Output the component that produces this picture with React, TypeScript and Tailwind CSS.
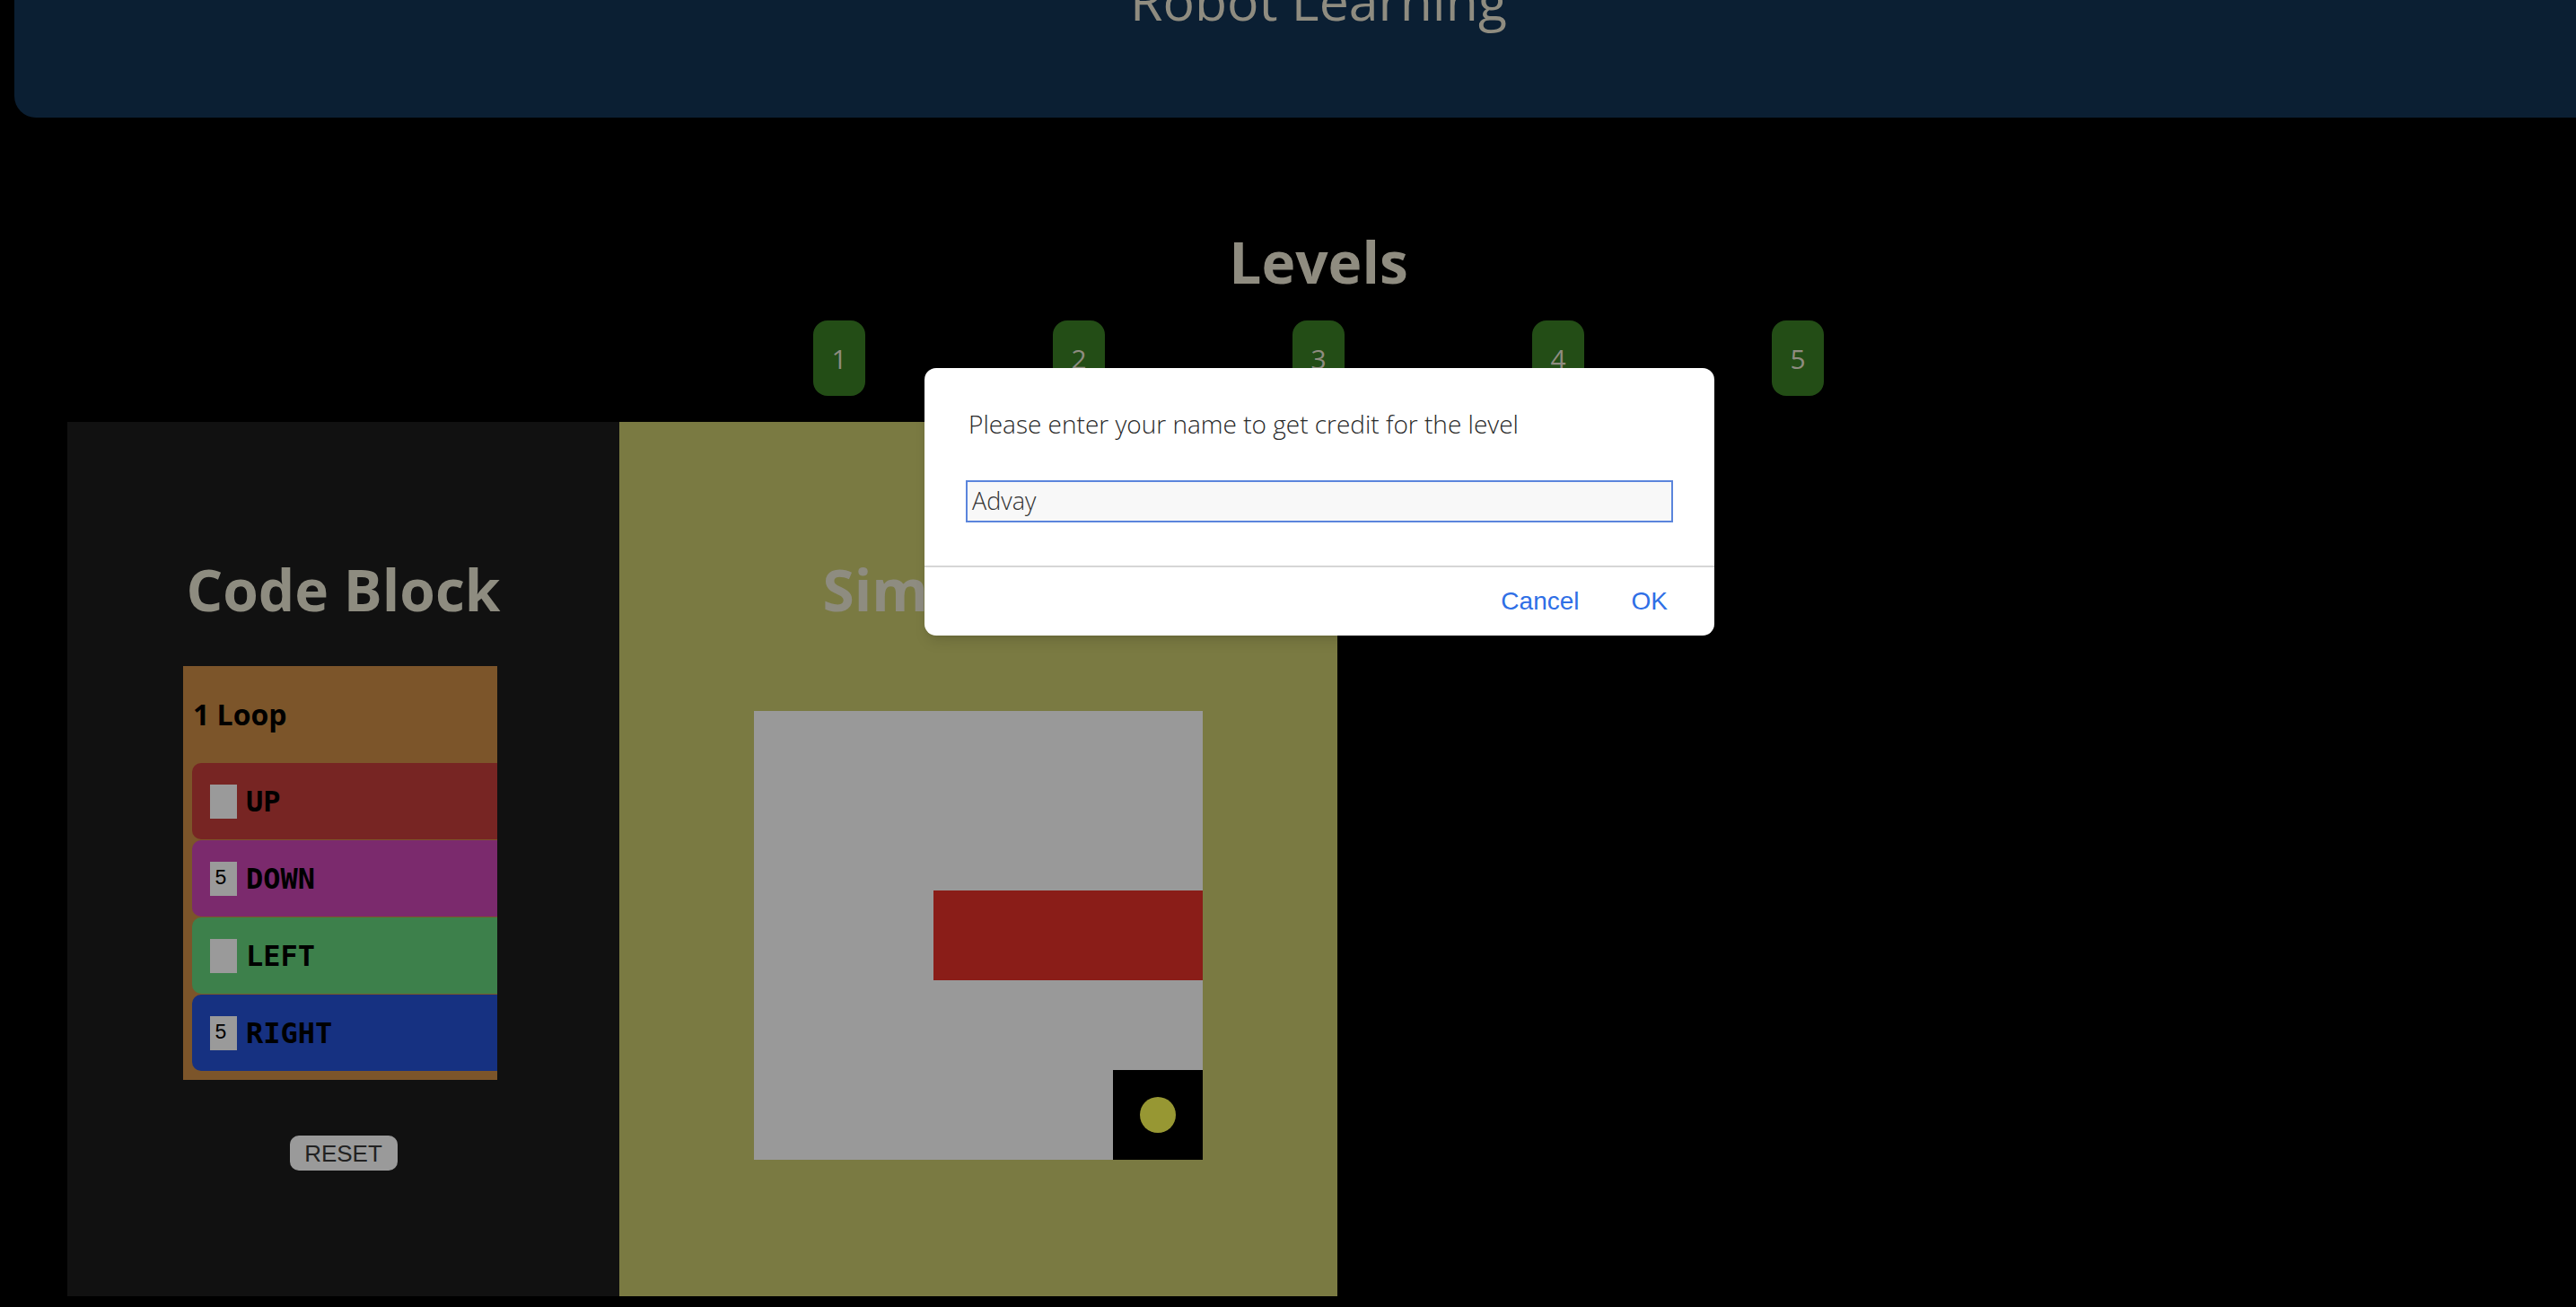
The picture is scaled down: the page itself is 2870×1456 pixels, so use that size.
import React from "react";

const levels = [1, 2, 3, 4, 5];

const moves = [
  { label: "UP", value: "", color: "bg-[#772523]" },
  { label: "DOWN", value: "5", color: "bg-[#7b2a6d]" },
  { label: "LEFT", value: "", color: "bg-[#3d804b]" },
  { label: "RIGHT", value: "5", color: "bg-[#163181]" },
];

function CodeBlock() {
  return (
    <div className="w-[615px] h-[974px] bg-[#111111] flex flex-col items-center">
      <h2 className="mt-[155px] text-[64px] leading-none font-bold text-[#8e8c80] font-['Open_Sans',sans-serif]">
        Code Block
      </h2>

      {/* loop block */}
      <div className="mt-[53px] self-start ml-[129px] w-[350px] bg-[#7c552a] pl-[10px] pb-[10px] overflow-hidden">
        <div className="h-[108px] flex items-center pl-[1px] text-[32px] leading-none font-bold text-black font-['Open_Sans',sans-serif]">
          1 Loop
        </div>
        <div className="flex flex-col gap-[1px] w-[360px]">
          {moves.map((m) => (
            <div key={m.label} className={`h-[85px] rounded-[10px] flex items-center pl-[20px] gap-[10px] ${m.color}`}>
              <div className="w-[30px] h-[38px] bg-[#9a9a9a] flex items-center pl-[5px] pt-[2px] text-[23px] leading-none text-black font-['Liberation_Mono',monospace]">
                {m.value}
              </div>
              <span className="text-[32px] leading-none font-bold text-black font-['DejaVu_Sans_Mono',monospace]">
                {m.label}
              </span>
            </div>
          ))}
        </div>
      </div>

      <button className="mt-[62px] w-[120px] h-[39px] rounded-[10px] bg-[#9a9a9a] text-[26px] leading-none text-[#222] font-['Liberation_Sans',sans-serif]">
        RESET
      </button>
    </div>
  );
}

function Simulation() {
  return (
    <div className="w-[800px] h-[974px] bg-[#7a7a42] flex flex-col items-center">
      <h2 className="mt-[155px] text-[64px] leading-none font-bold text-[#8e8c80] font-['Open_Sans',sans-serif]">
        Simulation
      </h2>
      <div className="mt-[103px] grid grid-cols-[repeat(5,100px)] grid-rows-[repeat(5,100px)] bg-[#999999]">
        <div className="col-start-3 col-span-3 row-start-3 bg-[#8a1d18]" />
        <div className="col-start-5 row-start-5 bg-black flex items-center justify-center">
          <div className="w-[40px] h-[40px] rounded-full bg-[#979733]" />
        </div>
      </div>
    </div>
  );
}

function NamePrompt() {
  return (
    <div className="absolute left-[1030px] top-[410px] w-[880px] h-[298px] bg-white rounded-[13px] flex flex-col shadow-lg font-['Open_Sans',sans-serif]">
      <div className="px-[46px] pt-[48px] pb-[48px]">
        <p className="pl-[3px] text-[28px] leading-none font-light text-[#2a2a2a]">
          Please enter your name to get credit for the level
        </p>
        <div className="mt-[49px] h-[47px] border-2 border-[#5b85dc] bg-[#f8f8f8] flex items-center pl-[5px] text-[27px] font-light text-[#333]">
          Advay
        </div>
      </div>
      <div className="h-[2px] bg-[#d6d6d6]" />
      <div className="flex-1 flex items-center justify-end gap-[58px] pr-[52px] text-[28px] text-[#2f6fe6] font-['Liberation_Sans',sans-serif]">
        <span>Cancel</span>
        <span>OK</span>
      </div>
    </div>
  );
}

export default function App() {
  return (
    <div className="relative w-[2870px] h-[1456px] overflow-hidden bg-black">
      <div className="w-[2938px] px-[16px]">
        {/* header */}
        <header className="h-[131px] bg-[#0b1f33] rounded-bl-[24px] rounded-br-[24px] flex flex-col items-center overflow-hidden">
          <h1 className="mt-[-29px] text-[59px] leading-none text-[#8f8c80] font-['Open_Sans',sans-serif]">
            Robot Learning
          </h1>
        </header>

        {/* levels */}
        <div className="flex flex-col items-center">
          <h2 className="mt-[129px] text-[64px] leading-none font-bold text-[#8f8c80] font-['Open_Sans',sans-serif]">
            Levels
          </h2>
          <div className="mt-[33px] flex gap-[209px]">
            {levels.map((n) => (
              <button
                key={n}
                className="w-[58px] h-[84px] rounded-[16px] bg-[#234d16] text-[30px] text-[#8f8c80] font-['Open_Sans',sans-serif]"
              >
                {n}
              </button>
            ))}
          </div>
        </div>

        {/* workspace */}
        <div className="mt-[29px] ml-[59px] flex">
          <CodeBlock />
          <Simulation />
        </div>
      </div>

      <NamePrompt />
    </div>
  );
}
